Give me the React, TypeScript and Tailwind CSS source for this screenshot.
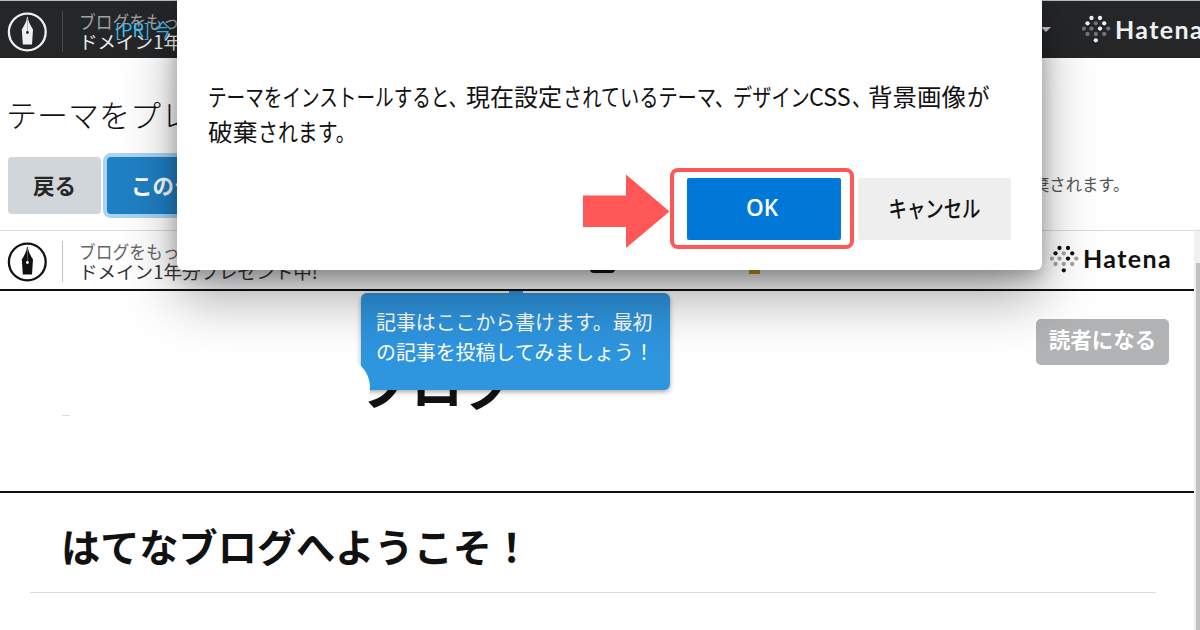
import clsx from "clsx";

interface ThemeProps {
  dark?: boolean;
}

function PenLogo({ dark }: ThemeProps) {
  const ink = dark ? "#eef0f2" : "#111";
  const hole = dark ? "#252628" : "#fff";

  return (
    <svg className="w-10 h-10 shrink-0" viewBox="0 0 40 40">
      <circle cx="20.3" cy="20" r="18.4" fill="none" stroke={ink} strokeWidth="2.3" />
      <path d="M20 5h.8c.4 4.500 2.500 8 5.200 12.500L25 32.500H15.800L14.800 17.500c2.700-4.500 4.800-8 5.200-12.500z" fill={ink} />
      <path d="M20.4 6v13" stroke={hole} strokeWidth="0.7" opacity="0.5" />
      <circle cx="20.4" cy="20.500" r="1.400" fill={hole} />
    </svg>
  );
}

const dots = [
  { x: 9.5, y: 3, on: true },
  { x: 18, y: 3, on: true },
  { x: 5.5, y: 8.3, on: true },
  { x: 13.8, y: 8.3, on: false },
  { x: 22.2, y: 8.3, on: true },
  { x: 1.9, y: 13.6, on: false },
  { x: 9.5, y: 13.6, on: false },
  { x: 18, y: 13.6, on: true },
  { x: 26.3, y: 13.6, on: false },
  { x: 5.5, y: 19, on: false },
  { x: 13.8, y: 19, on: false },
  { x: 22.2, y: 19, on: false },
  { x: 13.8, y: 25.3, on: true }
];

function HatenaLogo({ dark }: ThemeProps) {
  return (
    <div className={clsx("flex items-center shrink-0", dark ? "text-[#eef0f2]" : "text-[#111]")}>
      <svg className="w-[29px] h-7 mt-px" viewBox="0 0 29 28" fill="currentColor">
        {dots.map((d, i) => (
          <circle key={i} cx={d.x} cy={d.y} r="2.15" opacity={d.on ? 1 : 0.38} />
        ))}
      </svg>
      <span className="ml-1 w-[90px] font-[Lato,sans-serif] text-[25px] leading-8 font-bold tracking-[1.4px]">
        Hatena
      </span>
    </div>
  );
}

function Promo({ dark }: ThemeProps) {
  return (
    <div className="ml-4 -mt-px whitespace-nowrap text-lg leading-5">
      <p className={clsx("origin-left scale-x-[0.93]", dark ? "text-[#a0a1a2]" : "text-[#666]")}>ブログをもっ</p>
      <p className={clsx("w-max origin-left scale-x-[1.03]", dark ? "text-[#eee]" : "text-[#333]")}>ドメイン1年分プレゼント中!</p>
    </div>
  );
}

interface RunProps {
  children: string;
  width: string;
  scale?: string;
}

// a run of text with condensed kana
function Run({ children, width, scale }: RunProps) {
  return (
    <span className={clsx("shrink-0", width)}>
      <span className={clsx("inline-block origin-left", scale)}>{children}</span>
    </span>
  );
}

function InstallDialog() {
  return (
    <div className="absolute left-[177px] top-0 w-[865px] h-[270px] bg-white rounded-b-md pl-[31px] pr-[31px] shadow-[0_28px_56px_rgba(0,0,0,0.34),0_6px_18px_rgba(0,0,0,0.26)]">
      <div className="pt-[78px] text-2xl leading-[35px] text-[#111] whitespace-nowrap">
        <p className="flex">
          <Run width="w-[258px]" scale="scale-x-[0.775]">テーマをインストールすると、</Run>
          <Run width="w-[97px]">現在設定</Run>
          <Run width="w-[170px]" scale="scale-x-[0.8]">されているテーマ、</Run>
          <Run width="w-[76px]" scale="scale-x-[0.8]">デザイン</Run>
          <Run width="w-[43px]" scale="scale-x-[0.97]">CSS</Run>
          <Run width="w-[16px]" scale="scale-x-[0.8]">、</Run>
          <Run width="w-[99px]" scale="scale-x-[1.02]">背景画像</Run>
          <Run width="w-[24px]" scale="scale-x-[0.94]">が</Run>
        </p>
        <p className="flex">
          <Run width="w-[50px]" scale="scale-x-[1.03]">破棄</Run>
          <Run width="w-[100px]" scale="scale-x-[0.83]">されます。</Run>
        </p>
      </div>

      <div className="mt-[30px] flex justify-end gap-[17px]">
        <button className="relative w-[154px] h-[62px] rounded-xs bg-[#0078d7] pb-0.5 text-white text-[22.5px] leading-none font-semibold font-['Open_Sans',sans-serif]">
          <span className="inline-block -ml-1">OK</span>
          <span className="absolute -inset-x-[17px] -top-[10px] -bottom-[9px] mr-1 rounded-lg border-4 border-[#ff5757]" />
        </button>
        <button className="w-[153px] h-[62px] rounded-xs bg-[#eee] pb-1 text-[#111] text-[23px] leading-none font-medium">
          <span className="inline-block scale-x-[0.8] -mx-3">キャンセル</span>
        </button>
      </div>

      <svg className="absolute left-[405px] top-[174px] w-[88px] h-[74px]" viewBox="0 0 88 74">
        <path d="M1 21.5H44V0.5L87.500 37.500L44 74V53H1z" fill="#ff5757" />
      </svg>
    </div>
  );
}

function WelcomeTip() {
  return (
    <div className="absolute left-[361px] top-[2px] w-[309px] h-[97px] rounded-md bg-[#2e95df] pl-[15px] pt-[14px] text-[19.9px] leading-[30px] text-white whitespace-nowrap shadow-[0_2px_5px_rgba(0,0,0,0.35)]">
      <span className="absolute left-[148px] -top-[2px] w-[14px] h-[2px] bg-[#2e95df]" />
      <p>記事はここから書けます。最初</p>
      <p>の記事を投稿してみましょう！</p>
    </div>
  );
}

export default function App() {
  return (
    <div className="relative w-[1200px] h-[630px] overflow-hidden bg-white text-[#111] font-['Noto_Sans_CJK_JP',sans-serif]">
      <header className="relative h-[58px] border-t border-[#b9bcbe] bg-[#252628] flex items-center pl-[7px] pt-1">
        <PenLogo dark />
        <div className="ml-[15px] w-px h-[41px] bg-[#484a4c]" />
        <Promo dark />
        <span className="absolute left-[115px] top-[16px] text-[18px] leading-6 text-[#36bdf0] whitespace-nowrap">[PR] 今</span>
        <div className="absolute left-[1041px] top-0 h-[57px] flex items-center">
          <svg className="w-[10px] h-[5px]" viewBox="0 0 10 5">
            <path d="M0 0h10L5 5z" fill="#ccc" />
          </svg>
          <div className="ml-[31px] -mt-0.5">
            <HatenaLogo dark />
          </div>
        </div>
      </header>

      <section className="h-[173px] border-b border-[#d9dde2] pl-2 pt-[33px]">
        <h1 className="-ml-0.5 text-[31px] leading-[46px] font-light text-[#111] whitespace-nowrap">テーマをプレ</h1>
        <div className="mt-[20px] flex items-center whitespace-nowrap">
          <button className="w-[93px] h-[57px] rounded bg-[#d1d6da] text-[#252628] text-[21.5px] font-bold">戻る</button>
          <button className="ml-1.5 w-[236px] h-[57px] rounded bg-[#1f80c4] pl-6 text-left text-white text-[21.5px] font-bold ring-4 ring-[#a9d4f3]">
            このテ
          </button>
          <p className="ml-[690px] -mt-[3px] text-[17px] text-[#555]">
            <span className="inline-block origin-left scale-x-[0.96]">棄されます。</span>
          </p>
        </div>
      </section>

      <div className="flex h-[399px]">
        <main className="w-[1194px] shrink-0">
          <div className="h-[60px] border-b-2 border-[#111] flex items-center pl-[7px] pt-[3px]">
            <PenLogo />
            <div className="ml-[15px] w-px h-[41px] bg-[#c4c4c4]" />
            <Promo />
            <div className="ml-auto mr-[21px] -mt-[7px]">
              <HatenaLogo />
            </div>
          </div>

          <div className="relative h-[202px] border-b-2 border-[#111]">
            <div className="flex justify-end pt-[28px] pr-[25px]">
              <button className="w-[133px] h-[46px] rounded-[5px] bg-[#b1b3b4] pb-1.5 text-[21.5px] leading-none font-bold text-white">
                読者になる
              </button>
            </div>
            <h2 className="-mt-[20px] pl-[359px] text-[52px] leading-[76px] font-bold">ブログ</h2>
            <WelcomeTip />
            <span className="absolute left-[312px] top-[67px] w-[58px] h-[58px] rounded-full bg-white" />
            <span className="absolute left-[62px] top-[124px] w-2 h-px bg-[#ddd]" />
          </div>

          <article className="ml-[30px] w-[1126px] h-[100px] border-b border-[#ddd] pl-[31px] pt-[23px]">
            <h3 className="text-[39.2px] leading-[58px] font-bold whitespace-nowrap">はてなブログへようこそ！</h3>
          </article>
        </main>
        <div className="w-1.5 bg-[#f1f1f1] pl-0.5 pt-8">
          <div className="h-full bg-[#c1c1c1]" />
        </div>
      </div>

      {/* toolbar icons peeking out below the dialog */}
      <span className="absolute left-[590px] top-[268px] w-[25px] h-[5px] rounded-b bg-[#111]" />
      <span className="absolute left-[749px] top-[268px] w-[11px] h-[6px] bg-[#d79a1c]" />

      <InstallDialog />
    </div>
  );
}
